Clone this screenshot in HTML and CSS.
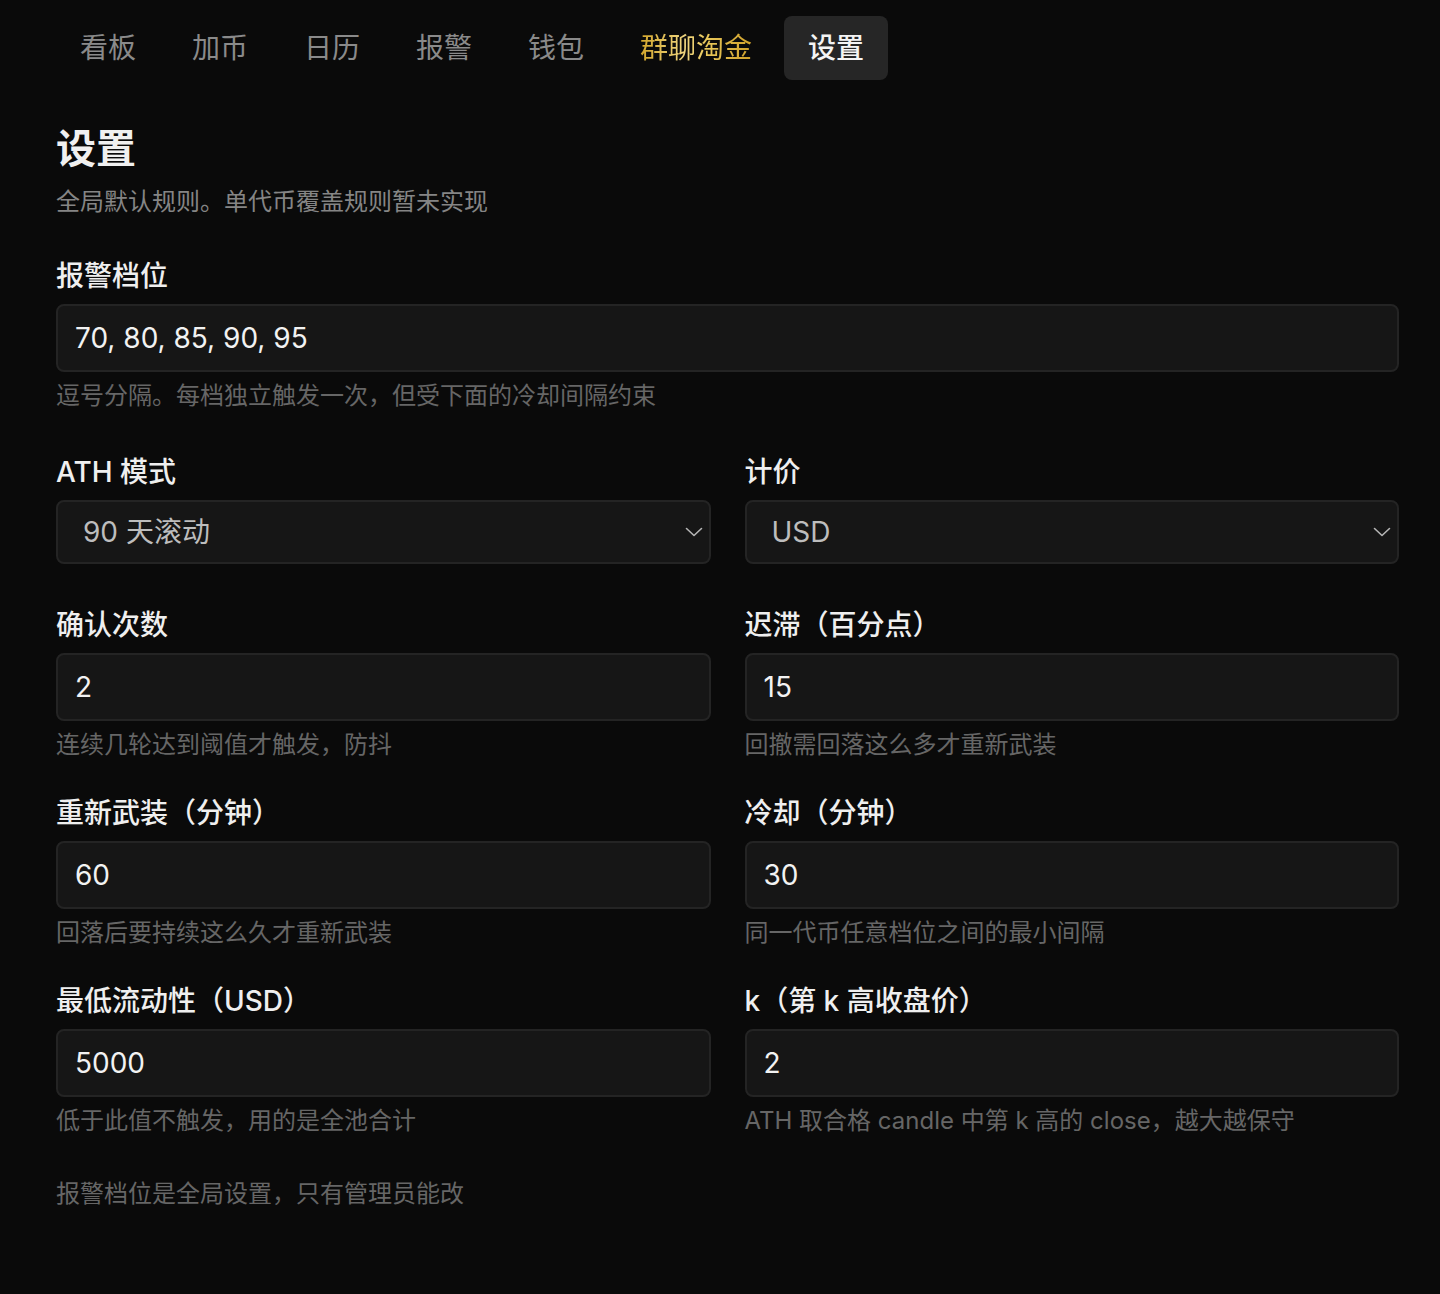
FILE: index.html
```html
<!DOCTYPE html>
<html lang="zh-CN">
<head>
<meta charset="utf-8">
<title>设置</title>
<link rel="stylesheet" href="styles.css">
</head>
<body>
<nav class="tabs">
  <a class="tab">看板</a>
  <a class="tab">加币</a>
  <a class="tab">日历</a>
  <a class="tab">报警</a>
  <a class="tab">钱包</a>
  <a class="tab tab--gold"><span class="gold-text">群聊淘金</span></a>
  <a class="tab tab--active">设置</a>
</nav>
<main class="page">
  <h1 class="title">设置</h1>
  <p class="subtitle">全局默认规则。单代币覆盖规则暂未实现</p>

  <div class="field">
    <label class="label">报警档位</label>
    <input class="input" type="text" value="70, 80, 85, 90, 95">
    <p class="hint">逗号分隔。每档独立触发一次，但受下面的冷却间隔约束</p>
  </div>

  <div class="grid">
    <div class="field field--nohint">
      <label class="label">ATH 模式</label>
      <div class="select-wrap">
        <select class="select"><option>90 天滚动</option></select>
        <svg class="chevron" width="18" height="10" viewBox="0 0 18 10"><path d="M1.5 1.5 L9 8.5 L16.5 1.5" fill="none" stroke="#b5b5b5" stroke-width="1.6" stroke-linecap="round" stroke-linejoin="round"/></svg>
      </div>
    </div>
    <div class="field field--nohint">
      <label class="label">计价</label>
      <div class="select-wrap">
        <select class="select"><option>USD</option></select>
        <svg class="chevron" width="18" height="10" viewBox="0 0 18 10"><path d="M1.5 1.5 L9 8.5 L16.5 1.5" fill="none" stroke="#b5b5b5" stroke-width="1.6" stroke-linecap="round" stroke-linejoin="round"/></svg>
      </div>
    </div>

    <div class="field">
      <label class="label">确认次数</label>
      <input class="input" type="text" value="2">
      <p class="hint">连续几轮达到阈值才触发，防抖</p>
    </div>
    <div class="field">
      <label class="label">迟滞（百分点）</label>
      <input class="input" type="text" value="15">
      <p class="hint">回撤需回落这么多才重新武装</p>
    </div>

    <div class="field">
      <label class="label">重新武装（分钟）</label>
      <input class="input" type="text" value="60">
      <p class="hint">回落后要持续这么久才重新武装</p>
    </div>
    <div class="field">
      <label class="label">冷却（分钟）</label>
      <input class="input" type="text" value="30">
      <p class="hint">同一代币任意档位之间的最小间隔</p>
    </div>

    <div class="field">
      <label class="label">最低流动性（USD）</label>
      <input class="input" type="text" value="5000">
      <p class="hint">低于此值不触发，用的是全池合计</p>
    </div>
    <div class="field">
      <label class="label">k（第 k 高收盘价）</label>
      <input class="input" type="text" value="2">
      <p class="hint">ATH 取合格 candle 中第 k 高的 close，越大越保守</p>
    </div>
  </div>

  <p class="note">报警档位是全局设置，只有管理员能改</p>
</main>
</body>
</html>
```

FILE: styles.css
```css
* { box-sizing: border-box; }

html, body {
  margin: 0;
  padding: 0;
  background: #0a0a0a;
}

body {
  font-family: "Inter", "Noto Sans CJK SC", "Noto Sans", sans-serif;
  color: #ededed;
  min-height: 1294px;
}

.tabs {
  display: flex;
  gap: 8px;
  padding: 16px 0 0 56px;
}

.tab {
  display: block;
  height: 64px;
  padding: 0 24px;
  font-size: 28px;
  line-height: 64px;
  color: #8a8a8a;
  border-radius: 8px;
  text-decoration: none;
}

.tab--active {
  background: #262626;
  color: #f4f4f4;
  font-weight: 500;
}

.gold-text {
  background: linear-gradient(90deg, #d2a62c 0%, #f0d680 40%, #e8c75a 60%, #d1a22a 100%);
  -webkit-background-clip: text;
  background-clip: text;
  color: transparent;
}

.page {
  margin: 0 41px 0 56px;
}

.title {
  margin: 45px 0 0;
  font-size: 40px;
  line-height: 48px;
  font-weight: 700;
  color: #f0f0f0;
}

.subtitle {
  margin: 11px 0 0;
  font-size: 24px;
  line-height: 36px;
  color: #858585;
}

.field {
  display: flex;
  flex-direction: column;
}

.page > .field {
  margin-top: 36px;
}

.label {
  font-size: 28px;
  line-height: 40px;
  font-weight: 500;
  color: #efefef;
  margin-bottom: 8px;
}

.input {
  height: 68px;
  width: 100%;
  background: #161616;
  border: 2px solid #242424;
  border-radius: 8px;
  padding: 0 17px;
  font-family: inherit;
  font-size: 28px;
  color: #f2f2f2;
  outline: none;
}

.hint {
  margin: 6px 0 0;
  font-size: 24px;
  line-height: 36px;
  color: #666666;
}

.grid {
  display: grid;
  grid-template-columns: 1fr 1fr;
  column-gap: 34px;
  row-gap: 30px;
  margin-top: 38px;
}

.field--nohint {
  margin-bottom: 11px;
}

.select-wrap {
  position: relative;
}

.select {
  -webkit-appearance: none;
  appearance: none;
  display: block;
  width: 100%;
  height: 64px;
  background: #161616;
  border: 2px solid #242424;
  border-radius: 8px;
  padding: 0 50px 0 25px;
  font-family: inherit;
  font-size: 28px;
  color: #bdbdbd;
  outline: none;
}

.chevron {
  position: absolute;
  right: 8px;
  top: 27px;
  pointer-events: none;
}

.note {
  margin: 37px 0 0;
  font-size: 24px;
  line-height: 36px;
  color: #666666;
}
```
